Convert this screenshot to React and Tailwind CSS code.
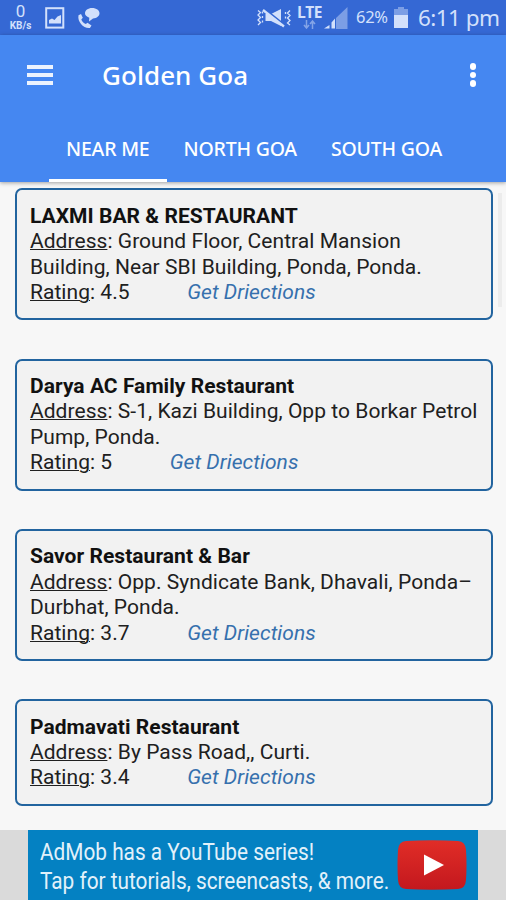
const tabs = ['NEAR ME', 'NORTH GOA', 'SOUTH GOA'];

const restaurants = [
  {
    name: 'LAXMI BAR & RESTAURANT',
    address: ['Ground Floor, Central Mansion', 'Building, Near SBI Building, Ponda, Ponda.'],
    rating: '4.5',
  },
  {
    name: 'Darya AC Family Restaurant',
    address: ['S-1, Kazi Building, Opp to Borkar Petrol', 'Pump, Ponda.'],
    rating: '5',
  },
  {
    name: 'Savor Restaurant & Bar',
    address: ['Opp. Syndicate Bank, Dhavali, Ponda–', 'Durbhat, Ponda.'],
    rating: '3.7',
  },
  {
    name: 'Padmavati Restaurant',
    address: ['By Pass Road,, Curti.'],
    rating: '3.4',
  },
];

// ── Status bar ───────────────────────────────────────────────────────────────

function StatusBar() {
  return (
    <div className="flex h-[35px] shrink-0 items-center bg-[#3568d4] text-[#d3e0fb]">
      <div className="ml-[8px] flex w-[25px] flex-col items-center font-['Roboto',sans-serif]">
        <span className="text-[17px] leading-[17px]">0</span>
        <span className="text-[10px] leading-[12px] font-bold">KB/s</span>
      </div>
      <svg className="ml-[12px] h-[22px] w-[20px]" viewBox="0 0 20 22" fill="none">
        <rect x="1.2" y="1.2" width="17.1" height="19.4" stroke="currentColor" strokeWidth="2" />
        <path d="M4 16.500V13l3-1.500 2.500 1.500 3-3.500 3.500-1.500v8.500z" fill="currentColor" />
      </svg>
      <svg className="ml-[12px] h-[22px] w-[23px]" viewBox="0 0 23 22" fill="currentColor">
        <path d="M15 1c4.500 0 7.500 2.300 7.500 5.300 0 2.900-2.700 5-6.500 5.200L12 14.500l.3-3.800C9.500 9.800 8 8.300 8 6.300 8 3.300 11 1 15 1z" />
        <path d="M1.500 8.200 4 7l1.800 3.800-1.500 1.600c.8 2 2.400 3.600 4.500 4.600l1.700-1.300 4 2.800-1.600 2.500C7 22 .1 15 1.500 8.200z" />
      </svg>

      <svg className="ml-auto h-[20px] w-[34px]" viewBox="0 0 34 20" fill="none">
        <path d="M1 2.500l2.500 2L1 7l2.500 2.500L1 12l2.500 2.500L1 17M5.500 3.500v2M5.500 8v2M5.500 12.500v2M33 2.500 30.500 5 33 7.500 30.500 10l2.500 2.500-2.500 2.500 2.500 2M28.500 4v2M28.500 8.500v2" stroke="currentColor" strokeWidth="1.300" />
        <path d="M8.500 6H14l10-5v17l-10-5H8.500z" fill="currentColor" />
        <path d="M7 .5 27 16.500" stroke="#3568d4" strokeWidth="2" />
        <path d="M6 2 27 18.500" stroke="currentColor" strokeWidth="2.300" />
      </svg>
      <div className="mb-[2px] ml-[6px] flex h-[24px] w-[25px] flex-col items-center">
        <span className="font-['Open_Sans',sans-serif] text-[15.500px] leading-[15px] font-bold tracking-[-0.5px]">LTE</span>
        <svg className="h-[9px] w-[13px] opacity-50" viewBox="0 0 13 9" fill="none" stroke="currentColor" strokeWidth="1.500">
          <path d="M3.500 0v8M1 5l2.500 3L6 5M9.500 9V1M7 4l2.500-3L12 4" />
        </svg>
      </div>
      <svg className="ml-[2px] h-[22px] w-[24px]" viewBox="0 0 24 22" fill="currentColor">
        <path d="M12 22V11L23.500 0v22z" opacity=".45" />
        <path d="M0 21.500 5.500 18v3.500zM7.500 15.500l3.500-4v10H7.500z" />
      </svg>
      <span className="ml-[8px] w-[35px] font-['Noto_Sans',sans-serif] text-[16.500px] tracking-[-0.3px]">62%</span>
      <svg className="ml-[3px] h-[21px] w-[14px]" viewBox="0 0 14 21" fill="currentColor">
        <path d="M0 2h4V0h6v2h4v7H0z" opacity=".45" />
        <path d="M0 8h14v13H0z" />
      </svg>
      <span className="mr-[6px] ml-[10px] w-[82px] whitespace-nowrap font-['Noto_Sans',sans-serif] text-[22.500px] leading-[28px] tracking-[-0.55px]">6:11 pm</span>
    </div>
  );
}

// ── App bar + tabs ───────────────────────────────────────────────────────────

function Header() {
  return (
    <header className="z-10 flex h-[147px] shrink-0 flex-col bg-[#4587f1] font-['Noto_Sans',sans-serif] text-white shadow-[0_1px_4px_rgba(0,0,0,0.35)]">
      <div className="flex h-[80px] items-center">
        <button className="ml-[27px] flex w-[26px] flex-col gap-[4px]" aria-label="Menu">
          <span className="h-[4px] w-full bg-white/90" />
          <span className="h-[4px] w-full bg-white/90" />
          <span className="h-[4px] w-full bg-white/90" />
        </button>
        <h1 className="ml-[49px] text-[26px] leading-[36px] font-medium tracking-[0.05px]">Golden Goa</h1>
        <button className="mr-[30px] ml-auto flex flex-col gap-[2px]" aria-label="More">
          <span className="size-[6.500px] rounded-full bg-white" />
          <span className="size-[6.500px] rounded-full bg-white" />
          <span className="size-[6.500px] rounded-full bg-white" />
        </button>
      </div>
      <nav className="ml-[49px] flex h-[67px]">
        {tabs.map((tab, i) => (
          <div
            key={tab}
            className={`flex items-center justify-center border-b-[3px] px-[17px] pt-[4px] text-[19.500px] font-medium tracking-[-0.2px] ${
              i === 0 ? 'border-white' : 'border-transparent'
            }`}
          >
            {tab}
          </div>
        ))}
      </nav>
    </header>
  );
}

// ── Restaurant card ──────────────────────────────────────────────────────────

function RestaurantCard({ item }) {
  return (
    <article className="mb-[38.300px] rounded-[7px] border-2 border-[#22649f] bg-[#f2f2f2] px-[13.500px] pt-[13.400px] pb-[13px] text-[21px] leading-[25.400px] tracking-[0.04px] whitespace-nowrap text-[#202020]">
      <h2 className="font-bold text-[#111]">{item.name}</h2>
      <p>
        <span className="underline decoration-1">Address</span>: {item.address[0]}
      </p>
      {item.address.slice(1).map(line => <p key={line}>{line}</p>)}
      <div className="flex">
        <span><span className="underline decoration-1">Rating</span>: {item.rating}</span>
        <a className="ml-[57.500px] text-[#3670ad] italic">Get Driections</a>
      </div>
    </article>
  );
}

// ── Ad banner ────────────────────────────────────────────────────────────────

function AdBanner() {
  return (
    <div className="flex h-[70px] shrink-0 justify-center bg-[#dadada]">
      <div className="flex w-[450px] items-center bg-[#0481c2] pl-[12px]">
        <div className="w-[357px] origin-left scale-x-[0.885] pt-[4px] font-['Roboto',sans-serif] text-[23.500px] leading-[29.500px] whitespace-nowrap text-[#e2f1fa]">
          <p>AdMob has a YouTube series!</p>
          <p>Tap for tutorials, screencasts, &amp; more.</p>
        </div>
        <svg className="h-[50px] w-[70px]" viewBox="0 0 70 50">
          <defs>
            <linearGradient id="play" x1="0" y1="0" x2="0" y2="1">
              <stop offset="0" stopColor="#e12d27" />
              <stop offset="1" stopColor="#c3181e" />
            </linearGradient>
          </defs>
          <path d="M9 1Q35-.5 61 1 68.500 1.500 69 10 70 25 69 40 68.500 48.500 61 49 35 50.500 9 49 1.500 48.500 1 40 0 25 1 10 1.500 1.500 9 1z" fill="url(#play)" />
          <path d="M27 14.500 47 25 27 35.500z" fill="#fff" />
        </svg>
      </div>
    </div>
  );
}

export default function App() {
  return (
    <div className="flex h-[900px] w-[506px] flex-col overflow-hidden bg-[#f7f7f7]">
      <StatusBar />
      <Header />
      <main className="flex min-h-0 flex-1 overflow-hidden pt-[6.300px] font-['Roboto',sans-serif]">
        <div className="ml-[14.500px] w-[478.500px]">
          {restaurants.map(item => <RestaurantCard key={item.name} item={item} />)}
        </div>
        <div className="mt-[5px] ml-[5px] h-[114px] w-[4px] bg-[#ececec]" />
      </main>
      <AdBanner />
    </div>
  );
}
